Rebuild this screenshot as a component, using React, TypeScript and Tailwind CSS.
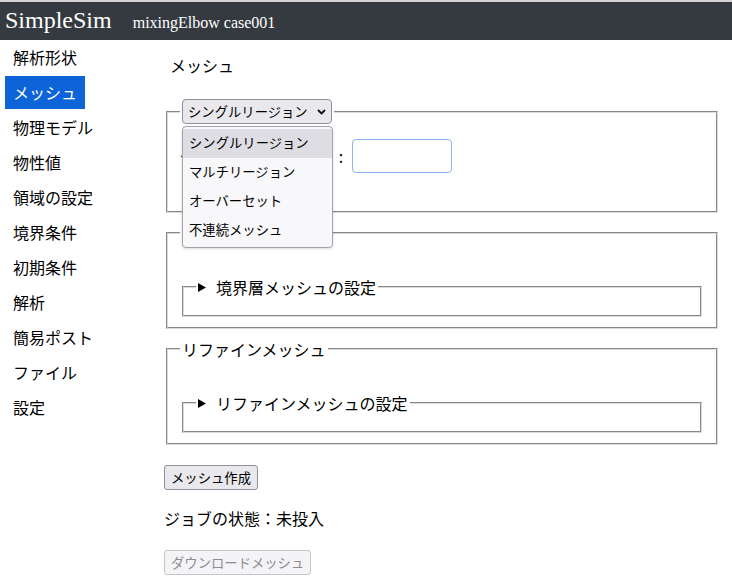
import { ReactNode } from 'react';

const jp = '[font-family:"Noto_Sans_CJK_JP","Noto_Sans",sans-serif]';

const menu = [
  '解析形状',
  'メッシュ',
  '物理モデル',
  '物性値',
  '領域の設定',
  '境界条件',
  '初期条件',
  '解析',
  '簡易ポスト',
  'ファイル',
  '設定',
];

const regionOptions = ['シングルリージョン', 'マルチリージョン', 'オーバーセット', '不連続メッシュ'];

function Triangle() {
  return (
    <svg width="8" height="9" viewBox="0 0 8 9" className="mr-[10px] shrink-0">
      <path d="M0 0 L8 4.5 L0 9 Z" fill="#000" />
    </svg>
  );
}

function Box({ legend, children }: { legend: ReactNode; children?: ReactNode }) {
  return (
    <fieldset className="mx-[2px] border-2 [border-style:groove] border-[#dcdcdc] px-[12px] pt-[5.6px] pb-[10px]">
      <legend className="px-[2px] text-[16px] leading-[24px]">{legend}</legend>
      {children}
    </fieldset>
  );
}

function Collapsed({ title }: { title: string }) {
  return (
    <Box
      legend={
        <span className="flex items-center">
          <Triangle />
          {title}
        </span>
      }
    />
  );
}

function RegionSelect() {
  return (
    <div className="relative">
      <div className="flex h-[25px] w-[150px] items-center rounded-[4px] border border-[#8f8f9d] bg-[#e9e9ed] pl-[5px] text-[13.33px] leading-[23px]">
        <span>シングルリージョン</span>
        <svg width="9" height="6" viewBox="0 0 9 6" className="ml-auto mr-[5px]">
          <path d="M1 1 L4.5 4.5 L8 1" fill="none" stroke="#111" strokeWidth="1.8" />
        </svg>
      </div>
      <div className="absolute left-0 top-[27px] z-10 w-[151px] rounded-[4px] border border-[#a3a3a8] bg-[#f8f8fa] py-[2px] shadow-[0_1px_3px_rgba(0,0,0,0.15)]">
        {regionOptions.map((o, i) => (
          <div
            key={o}
            className={`h-[29px] pl-[6px] text-[13.33px] leading-[28px] ${i === 0 ? 'bg-[#dedde3]' : ''}`}
          >
            {o}
          </div>
        ))}
      </div>
    </div>
  );
}

export default function App() {
  return (
    <div className={`min-h-[588px] w-[732px] bg-white text-black ${jp}`}>
      <div className="h-[2px] bg-[#d2d2d2]" />
      <header className="flex h-[38px] items-baseline bg-[#343a40] pl-[5px] pt-[1px] text-white [font-family:'Liberation_Serif',serif]">
        <span className="text-[24px] leading-[34px]">SimpleSim</span>
        <span className="ml-[21px] text-[16px]">mixingElbow case001</span>
      </header>

      <div className="flex">
        <nav className="flex w-[164px] shrink-0 flex-col gap-[2px] pl-[5px] pt-[1px]">
          {menu.map((m) => (
            <div
              key={m}
              className={`h-[33px] w-[80px] whitespace-nowrap px-[8px] text-[16px] leading-[33px] ${
                m === 'メッシュ' ? 'bg-[#0d63d8] text-white' : ''
              }`}
            >
              {m}
            </div>
          ))}
        </nav>

        <main className="w-[556px] pt-[13px]">
          <h2 className="h-[24px] pl-[6px] text-[16px] font-normal leading-[24px]">メッシュ</h2>

          <div className="mt-[22px]">
            <Box legend={<RegionSelect />}>
              <div className="mt-[9px] flex h-[34px] items-center text-[16px]">
                <span className="w-[158px] whitespace-nowrap">セルサイズ</span>
                <span className="w-[6px] text-center">:</span>
                <input className="ml-[8px] h-[34px] w-[100px] rounded-[4px] border border-[#8ab4f0] bg-white outline-none" />
              </div>
              <div className="h-[28px] text-[16px] leading-[28px]">（0で自動設定）</div>
            </Box>
          </div>

          <div className="mt-[8px]">
            <Box legend="境界層メッシュ">
              <div className="h-[25px]" />
              <Collapsed title="境界層メッシュの設定" />
            </Box>
          </div>

          <div className="mt-[8px]">
            <Box legend="リファインメッシュ">
              <div className="h-[25px]" />
              <Collapsed title="リファインメッシュの設定" />
            </Box>
          </div>

          <button className="mt-[20px] h-[25px] rounded-[3px] border border-[#8f8f9d] bg-[#e9e9ed] px-[6px] text-[13.33px] leading-[23px]">
            メッシュ作成
          </button>

          <div className="mt-[16px] h-[24px] text-[16px] leading-[24px]">ジョブの状態：未投入</div>

          <button
            disabled
            className="mt-[20px] h-[25px] rounded-[3px] border border-[#c5c5cb] bg-[#f4f4f6] px-[6px] text-[13.33px] leading-[23px] text-[#8d8d90]"
          >
            ダウンロードメッシュ
          </button>
        </main>
      </div>
    </div>
  );
}
